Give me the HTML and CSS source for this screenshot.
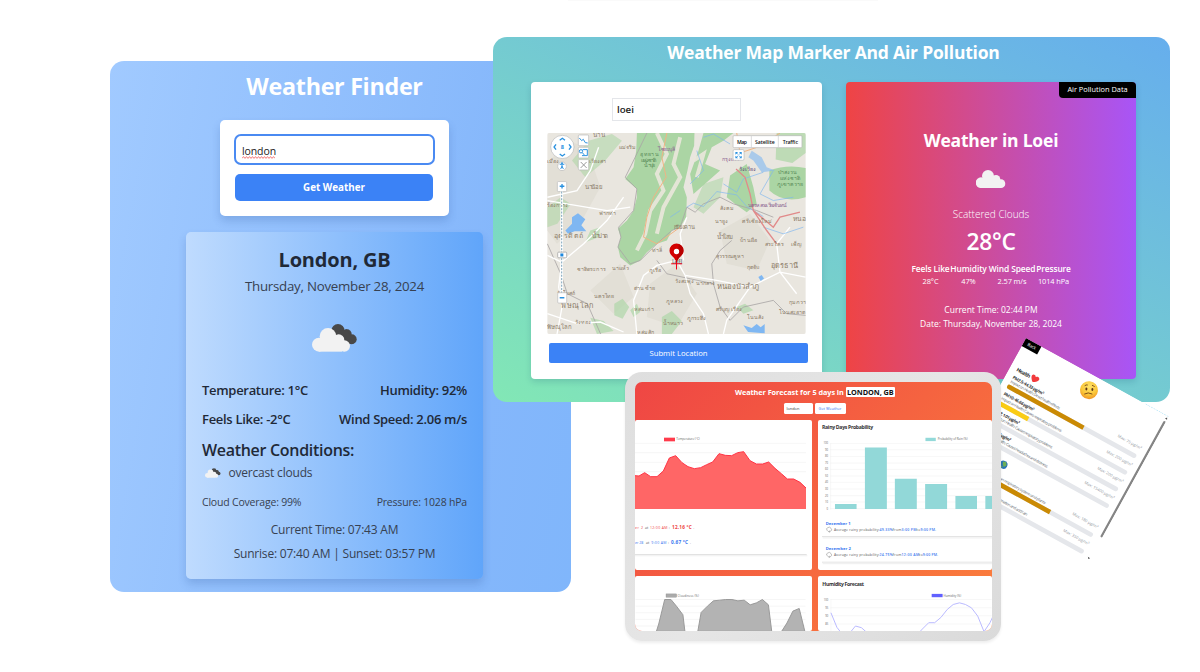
FILE: index.html
```html
<!DOCTYPE html>
<html lang="en">
<head>
<meta charset="utf-8">
<title>Weather Finder</title>
<link rel="stylesheet" href="styles.css">
</head>
<body>
<main class="board">
  <div class="top-edge"></div>

  <section class="window finder">
    <h1 class="finder-title">Weather Finder</h1>
    <form class="search">
      <div class="search-input"><span class="typed">london<svg class="squiggle" viewBox="0 0 33 3"><path d="M0 2.4l1.5-1.8 1.5 1.8 1.5-1.8 1.5 1.8 1.5-1.8 1.5 1.8 1.5-1.8 1.5 1.8 1.5-1.8 1.5 1.8 1.5-1.8 1.5 1.8 1.5-1.8 1.5 1.8 1.5-1.8 1.5 1.8 1.5-1.8 1.5 1.8 1.5-1.8 1.5 1.8 1.5-1.8 1.5 1.8"/></svg></span></div>
      <div class="search-button">Get Weather</div>
    </form>
    <article class="report">
      <h2 class="city">London, GB</h2>
      <p class="date">Thursday, November 28, 2024</p>
      <svg class="clouds-big" viewBox="0 0 134 84"><g fill="#484848"><circle cx="78" cy="20" r="20"/><circle cx="105" cy="30" r="14"/><circle cx="119" cy="46" r="15"/><path d="M65 25L105 16L125 60H100z"/></g><g fill="#f2f2f2"><circle cx="21" cy="62" r="21"/><circle cx="48" cy="37" r="25"/><circle cx="80" cy="48" r="17"/><circle cx="97" cy="66" r="17"/><path d="M21 45H90V83H21z"/></g></svg>
      <div class="pair"><span class="w101">Temperature: 1°C</span><span>Humidity: 92%</span></div>
      <div class="pair second"><span>Feels Like: -2°C</span><span>Wind Speed: 2.06 m/s</span></div>
      <h3 class="conditions">Weather Conditions:</h3>
      <div class="condition"><svg class="clouds-small" viewBox="0 0 134 84"><g fill="#484848"><circle cx="78" cy="20" r="20"/><circle cx="105" cy="30" r="14"/><circle cx="119" cy="46" r="15"/><path d="M65 25L105 16L125 60H100z"/></g><g fill="#f2f2f2"><circle cx="21" cy="62" r="21"/><circle cx="48" cy="37" r="25"/><circle cx="80" cy="48" r="17"/><circle cx="97" cy="66" r="17"/><path d="M21 45H90V83H21z"/></g></svg><span>overcast clouds</span></div>
      <div class="pair minor"><span>Cloud Coverage: 99%</span><span>Pressure: 1028 hPa</span></div>
      <p class="time">Current Time: 07:43 AM</p>
      <p class="time sun">Sunrise: 07:40 AM | Sunset: 03:57 PM</p>
    </article>
  </section>

  <section class="window marker">
    <h1 class="marker-title">Weather Map Marker And Air Pollution</h1>
    <div class="marker-cards">
      <div class="map-card">
        <div class="place">loei</div>
        <svg class="map" viewBox="171 307 776 604">
          <rect x="171" y="307" width="776" height="604" fill="#e9e6df"/>
          <g fill="#dedbd2" opacity=".7"><path d="M171 400L230 330 290 350 330 470 280 560 200 640 171 600zM480 760L560 700 620 790 560 890 470 860zM300 780L390 700 430 800 370 850zM690 600l90-50 60 80-40 90-90-20z"/></g>
          <g fill="#abd5a4">
            <path d="M440 307L613 307L612 345L600 380L592 420L580 470L590 500L588 560L570 590L545 600L530 630L500 640L470 665L450 690L420 705L390 680L383 650L392 620L383 595L410 570L430 540L440 500L440 475L405 445L430 410L438 360z"/>
            <path d="M645 400L665 350L700 330L730 307L640 307L625 360L600 430L610 490L650 455L690 420zM720 435L770 400L790 470L800 520L770 545L735 520L710 500z"/>
            <path d="M838 420Q890 400 947 412V500Q880 520 838 480z"/>
            <path d="M860 307h87v60l-40 30-50-10z" opacity=".7"/>
            <path d="M245 390l50-60 70-20 30 20-50 60-60 50zM171 530l40-30 30 20-40 60-30 10zM640 460l60-20-10 60-50 50-30-20z" opacity=".55"/>
            <path d="M372 820l25-15 20 25-20 35-25-10zM515 860l30-18 30 30-30 39h-30zM300 862l40 10 30 30-50 9zM740 830l25-10 25 20-30 10zM420 840l20-20 10 25-20 15zM300 600l30-10-5 30-40 15z" opacity=".65"/>
          </g>
          <g fill="none" stroke="#eae7dc" stroke-width="12" opacity=".9"><path d="M500 307L530 370L500 430L520 480L480 540L465 610L440 660M570 320L550 400L570 440L520 530L500 610M610 390L640 370L620 440"/></g>
          <g fill="none" stroke="#a9a6a6" stroke-width="2.5"><path d="M470 307L425 400L405 440L440 475L430 540L385 590L392 620L383 650L420 700L450 690L500 640L545 600L570 590L590 530L615 545L640 520L690 500L730 520L800 540L850 560M500 690L530 730 600 745 670 760 690 830 720 870 760 830 850 810 890 850 947 855M670 760L665 700 690 660 725 630M171 640l40 90 20 60 60 30 40 91"/></g>
          <g fill="none" stroke="#fff" stroke-width="4"><path d="M171 675L214 695L280 640L350 570L400 500M214 690L205 770L215 830L200 911M325 350L300 420L260 480L171 500M171 850L260 880L330 875L400 905M560 690L500 705L460 735L430 810L440 911M560 690L585 735L600 790L640 850L655 911M580 690L570 610L590 560M585 735L680 750L780 770L870 725L947 740M870 725L860 640L900 590M870 725L920 790M700 911L710 870L780 770M171 510L350 540L420 530"/></g>
          <g fill="none" stroke="#7eb6ef" stroke-width="2"><path d="M590 530l20-12 30 10 40-45 60 10 30 35 50 30M700 460l40 25 20-40 60-20M850 420l-40 70 40 20 60-10M620 360l20 60-40 40M540 560l30-20M820 590l60 20 60-20M640 320l30-10 50 30"/></g>
          <g fill="#7fb7f2"><path d="M245 560l18-12 22 18-12 18 15 18-35 0-20 8 -8-10 20-20zM760 885l25 8 15-12 12 10 12-10v28l-50-4zM805 740l10-6 7 10-10 8z"/><path d="M785 360l30 20 15 30 25 10-40 5-25-35-15-10z" opacity=".6"/></g>
          <g fill="none" stroke="#e18a8a" stroke-width="4"><path d="M738 415L765 440L780 490L790 540L850 590L870 560L930 545M790 540L830 600L860 640"/></g>
          <g fill="none" stroke="#f0b384" stroke-width="3"><path d="M530 307L515 380L528 440L490 500L470 560L460 620L500 640L570 590M740 307l10 60 60-20 60-40"/></g>
          <g class="thai">
            <text x="309" y="320" font-size="19">น่าน</text><text x="386" y="355" textLength="52">แม่จริม</text>
            <text x="504" y="362" textLength="50" fill="#8a6090">ไชยะบุลี</text><text x="285" y="475" textLength="52" font-size="18">นาน้อย</text>
            <text x="450" y="376" fill="#578957" textLength="55">อุทยาน</text><text x="452" y="393" fill="#578957" textLength="45">แห่งชาติ</text><text x="458" y="410" fill="#578957" textLength="33">น้ำปุย</text>
            <text x="171" y="397">เมือง</text><text x="295" y="397">เวียงสา</text><text x="171" y="530">ร้องกวาง</text>
            <text x="695" y="392" fill="#8a6090">กรุงเก่า</text><text x="746" y="420" fill="#604878">วังเวียง</text>
            <text x="864" y="431" fill="#578957">ป่าสงวน</text><text x="870" y="449" fill="#578957">แห่งชาติ</text><text x="862" y="467" fill="#578957">ภูเขาควาย</text>
            <text x="690" y="537">สังคม</text><text x="773" y="529" textLength="118" fill="#8a6090">นครหลวงเวียงจันทน์</text><text x="910" y="572" font-size="20">หนอง</text>
            <text x="326" y="552" textLength="52">ฟากท่า</text><text x="551" y="594" textLength="63" font-size="17">เชียงคาน</text><text x="676" y="576">นายูง</text><text x="757" y="576" textLength="90">ศรีเชียงใหม่</text>
            <text x="191" y="624" textLength="87" font-size="21">อุตรดิตถ์</text><text x="303" y="624" textLength="50" font-size="18">น้ำปาด</text><text x="679" y="625" textLength="48" font-size="18">น้ำโสม</text><text x="750" y="636" textLength="52">บ้านผือ</text><text x="825" y="647">สระใคร</text><text x="903" y="647">เพ็ญ</text>
            <text x="486" y="664">ท่าลี่</text><text x="678" y="684" textLength="84">สุวรรณคูหา</text><text x="771" y="717">กุดจับ</text><text x="842" y="714" textLength="82" font-size="22">อุดรธานี</text>
            <text x="260" y="721" textLength="86">ชาติตระการ</text><text x="364" y="718">นาแห้ว</text><text x="475" y="724">ภูเรือ</text><text x="555" y="758">วังสะพุง</text><text x="617" y="763">นากลาง</text><text x="680" y="775" textLength="127" font-size="23">หนองบัวลำภู</text>
            <text x="432" y="780" textLength="62">ด่านซ้าย</text><text x="200" y="794">วัดโบสถ์</text><text x="312" y="804" textLength="60">นครไทย</text><text x="528" y="818">ภูหลวง</text><text x="213" y="832" textLength="94" font-size="22">พิษณุโลก</text><text x="430" y="843" textLength="60">หล่มเก่า</text><text x="677" y="843" textLength="80">ศรีบุญเรือง</text>
            <text x="592" y="868">ภูกระดึง</text><text x="772" y="867">โนนสัง</text><text x="866" y="850" textLength="80">โนนสะอาด</text><text x="897" y="820">กุมภวาปี</text><text x="518" y="884" textLength="58">น้ำหนาว</text><text x="255" y="882">วังทอง</text><text x="171" y="897" font-size="18">พิษณุโลก</text><text x="440" y="911">หล่มสัก</text>
          </g>
          <g fill="#fff" stroke="#b8b8b8" stroke-width="2"><circle cx="216" cy="349" r="35"/><circle cx="215" cy="407" r="13"/><rect x="264" y="313" width="31" height="32" rx="3"/><rect x="264" y="350" width="31" height="32" rx="3"/><rect x="264" y="387" width="31" height="31" rx="3"/><rect x="201" y="453" width="28" height="30" rx="3"/><rect x="729" y="357" width="33" height="32" rx="4"/><rect x="729" y="315" width="207" height="36" rx="3"/></g>
          <path d="M214 483V788" stroke="#fff" stroke-width="8"/><path d="M214 483V788" stroke="#7aa3ba" stroke-width="3" stroke-dasharray="6 4"/>
          <rect x="202" y="665" width="27" height="17" rx="3" fill="#fff" stroke="#999" stroke-width="2"/><rect x="210" y="669" width="9" height="9" fill="#1d87dd"/>
          <rect x="202" y="787" width="27" height="31" rx="3" fill="#fff" stroke="#bbb" stroke-width="2"/>
          <g fill="none" stroke="#2a91df" stroke-width="4"><path d="M208 329l8-6 8 6M208 370l8 6 8-6M197 341l-6 8 6 8M236 341l6 8-6 8M208 467h14M215 460v14M208 802h14"/><path d="M267 322l7 8 5-4 6 10 7 1" stroke-width="3"/><circle cx="272" cy="362" r="5" stroke-width="3"/><path d="M277 357h14v18h-16M276 366l6 7" stroke-width="3"/><path d="M215 403v7M208 401h14M215 407l-4 8M215 407l4 8" stroke-width="3"/></g>
          <circle cx="215" cy="398" r="3" fill="#2a91df"/><text x="216" y="355" text-anchor="middle" font-size="17" font-weight="700" fill="#2a91df">8</text>
          <path d="M271 394l18 18M289 394l-18 18" stroke="#999" stroke-width="3"/>
          <path d="M736 364h8l-8 8zM755 364h-8l8 8zM736 383h8l-8-8zM755 383h-8l8-8z" fill="#2a91df"/><path d="M739 367l13 13M752 367l-13 13" stroke="#2a91df" stroke-width="3" stroke-dasharray="6 6"/>
          <path d="M784 316V350M865 316V350" stroke="#ccc" stroke-width="2"/>
          <g font-size="15.5" font-weight="600" fill="#111"><text x="741" y="339" textLength="30">Map</text><text x="795" y="339" textLength="59">Satellite</text><text x="878" y="339" textLength="46">Traffic</text></g>
          <text x="544" y="701" font-size="22" fill="#666">เลย</text>
          <path d="M543 700H576M559 682V717" stroke="#f00018" stroke-width="3"/>
          <path d="M559 696C552 676 538 676 538 660a21 21 0 0 1 42 0C580 676 566 676 559 696z" fill="#d40000"/><path d="M566 641a21 21 0 0 1 14 20C580 676 566 676 559 696z" fill="#b80000"/><circle cx="559" cy="663" r="8" fill="#fff"/>
        </svg>
        <div class="submit">Submit Location</div>
      </div>
      <div class="loei">
        <span class="badge">Air Pollution Data</span>
        <h2 class="loei-title">Weather in Loei</h2>
        <svg class="cloud" viewBox="0 0 88 54"><g fill="#f2f2f2"><circle cx="15" cy="38" r="16"/><circle cx="36" cy="18" r="18"/><circle cx="60" cy="28" r="13"/><circle cx="75" cy="41" r="13"/><path d="M15 28H70V54H12z"/><path d="M60 40H76V54H60z"/></g></svg>
        <p class="sky">Scattered Clouds</p>
        <p class="degrees">28°C</p>
        <div class="stats"><b>Feels Like</b><b>Humidity</b><b>Wind Speed</b><b>Pressure</b><span>28°C</span><span>47%</span><span>2.57 m/s</span><span>1014 hPa</span></div>
        <p class="now">Current Time: 02:44 PM</p>
        <p class="now day">Date: Thursday, November 28, 2024</p>
      </div>
    </div>
  </section>

  <svg class="paper" viewBox="0 0 490 492">
    <rect width="490" height="492" fill="#fff"/>
    <path d="M410 0H490" stroke="#7fd0f0" stroke-width="2" stroke-dasharray="6 3"/>
    <rect width="53" height="27" fill="#000"/><text x="13" y="18" font-size="13" fill="#fff" textLength="28">Back</text>
    <g font-weight="700" fill="#333"><text x="21" y="101" font-size="16" textLength="46">Health</text><g font-size="13"><text x="22" y="126" textLength="105">PM2.5: 44.33 µg/m³</text><text x="22" y="182" textLength="103">PM10: 46.66 µg/m³</text><text x="22" y="239" textLength="84">NO2: 1.01 µg/m³</text><text x="22" y="296" textLength="86">CO: 250.34 µg/m³</text></g></g>
    <path d="M81 106C64 93 69 81 78 85c3 1 4 4 4 4s5-7 11-2c7 7-5 17-12 19z" fill="#f23b3d"/>
    <g font-size="12" fill="#5a5f69"><text x="22" y="140" textLength="169">Impact on Health: Direct health effects</text><text x="22" y="197" textLength="206">Impact on Health: Causes respiratory problems</text><text x="22" y="254" textLength="206">Impact on Health: Causes respiratory problems</text><text x="22" y="311" textLength="221">Impact on Health: Causes headaches and dizziness</text><text x="22" y="410" textLength="268">Impact: Affects the human respiratory system and plants</text><text x="22" y="467" textLength="237">Impact: Contributes to particle formation and acid rain</text></g>
    <g font-size="12" fill="#9499a2" text-anchor="end"><text x="463" y="128">Max: 75 µg/m³</text><text x="463" y="185">Max: 200 µg/m³</text><text x="463" y="242">Max: 200 µg/m³</text><text x="463" y="298">Max: 15400 µg/m³</text><text x="463" y="398">Max: 180 µg/m³</text><text x="463" y="455">Max: 350 µg/m³</text></g>
    <g fill="#e5e7eb"><rect x="20" y="146" width="441" height="14" rx="7"/><rect x="20" y="203" width="441" height="14" rx="7"/><rect x="20" y="260" width="441" height="14" rx="7"/><rect x="20" y="317" width="441" height="14" rx="7"/><rect x="20" y="416" width="441" height="14" rx="7"/><rect x="20" y="473" width="441" height="14" rx="7"/></g>
    <path d="M27 146H281V160H27a7 7 0 0 1 0-14zM27 416H315V430H27a7 7 0 0 1 0-14z" fill="#ca8a04"/><path d="M27 203H123V217H27a7 7 0 0 1 0-14z" fill="#facc15"/>
    <defs><radialGradient id="face" cx=".5" cy=".3" r=".75"><stop offset="0" stop-color="#ffe36b"/><stop offset=".6" stop-color="#fac638"/><stop offset="1" stop-color="#ee8b22"/></radialGradient></defs>
    <g transform="translate(241 46) rotate(-24)"><circle r="27" fill="url(#face)"/><ellipse cx="-8" cy="-3" rx="3" ry="4.5" fill="#5c3516"/><ellipse cx="10" cy="-3" rx="3" ry="4.5" fill="#5c3516"/><path d="M-13 13Q-2 5 11 11M-14-12q4-4 9-3M8-15q5 0 8 4" fill="none" stroke="#6b3b12" stroke-width="2.5"/></g>
    <circle cx="124" cy="366" r="12" fill="#2a75b5"/><path d="M118 358l9-3 6 8-5 8-6-4zM119 371l6 1-2 5z" fill="#6caf56"/>
    <rect x="482" y="18" width="7" height="397" rx="3" fill="#858585"/><path d="M482 11h8l-4-6zM479 486h8l-4 5z" fill="#555"/>
  </svg>

  <section class="tablet">
    <div class="screen">
      <header class="forecast-head">
        <h2 class="forecast-title">Weather Forecast for 5 days in <span class="tag">LONDON, GB</span></h2>
        <div class="forecast-form"><span class="mini">london</span><span class="mini link">Get Weather</span></div>
      </header>
      <div class="charts">
        <svg class="panel tall" viewBox="45 165 531 450">
          <g stroke="#ededed" stroke-width="1.5"><path d="M45 235H558M45 263H558M45 292H558M45 320H558"/></g>
          <rect x="132" y="218" width="33" height="11" fill="#ff3b4b"/><text x="169" y="226" font-size="9" textLength="70" fill="#666">Temperature (°C)</text>
          <path d="M45 332L57 333 74 323 92 335 111 335 130 318 148 279 167 272 186 293 204 305 223 311 242 308 260 299 278 291 297 266 316 271 335 272 353 263 371 260 390 287 409 297 428 297 446 291 465 310 502 342 521 342 540 352 558 369V432H45z" fill="#ff6666"/>
          <path class="dots red" d="M45 332L57 333 74 323 92 335 111 335 130 318 148 279 167 272 186 293 204 305 223 311 242 308 260 299 278 291 297 266 316 271 335 272 353 263 371 260 390 287 409 297 428 297 446 291 465 310 484 326 502 342 521 342 540 352 558 369"/>
          <g font-size="10.5"><g fill="#ee3e3e"><text x="45" y="491" textLength="24">er 2</text><text x="90" y="491" textLength="52">12:00 AM</text><text x="156" y="492" font-size="14" font-weight="700" textLength="59">12.16 °C</text></g><g fill="#3675ef"><text x="45" y="536" textLength="25">er 28</text><text x="94" y="536" textLength="45">9:00 AM</text><text x="153" y="537" font-size="14" font-weight="700" textLength="51">0.67 °C</text></g><g fill="#555"><text x="75" y="491">at</text><text x="146" y="491">:</text><text x="220" y="491">.</text><text x="78" y="536">at</text><text x="144" y="536">:</text><text x="210" y="536">.</text></g></g>
          <rect x="45" y="567" width="515" height="3" fill="#e2e2e2"/><rect x="45" y="570" width="517" height="4" fill="#f3f3f3"/>
        </svg>
        <svg class="panel tall" viewBox="24 165 523 450">
          <g stroke="#eee" stroke-width="1.5"><path d="M60 235H547M60 254H547M60 274H547M60 294H547M60 313H547M60 333H547M60 352H547M60 372H547M60 392H547M60 411H547M60 431H547M62 235V434"/></g>
          <text x="36" y="192" font-size="15.5" font-weight="700" textLength="154" fill="#333">Rainy Days Probability</text>
          <rect x="347" y="218" width="31" height="10" fill="#93d9d9"/><text x="384" y="226" font-size="9" textLength="90" fill="#666">Probability of Rain (%)</text>
          <g class="axis"><text x="54" y="238">100</text><text x="54" y="257">90</text><text x="54" y="277">80</text><text x="54" y="297">70</text><text x="54" y="316">60</text><text x="54" y="336">50</text><text x="54" y="355">40</text><text x="54" y="375">30</text><text x="54" y="395">20</text><text x="54" y="414">10</text><text x="54" y="434">0</text></g>
          <path d="M75 417h65v15H75zM165 247h66v185h-66zM255 341h66v91h-66zM346 357h66v75h-66zM437 393h65v39h-65zM527 393h20v39h-20z" fill="#92d8d8"/>
          <g font-size="12.5" font-weight="700" fill="#3675ef"><text x="47" y="480" textLength="75">December 1</text><text x="47" y="556" textLength="76">December 2</text></g>
          <g fill="none" stroke="#888" stroke-width="1.6"><path id="rain" d="M52 497q-6-7 2-9 5-4 9 2 5 5-1 9l-4-1 1 4-5-3z"/><path d="M52 573q-6-7 2-9 5-4 9 2 5 5-1 9l-4-1 1 4-5-3z"/></g>
          <g font-size="10.5" fill="#555"><text x="72" y="498" textLength="137">Average rainy probability:</text><text x="249" y="498" textLength="26">from</text><text x="320" y="498" textLength="12">to</text><text x="72" y="574" textLength="137">Average rainy probability:</text><text x="249" y="574" textLength="26">from</text><text x="328" y="574" textLength="11">to</text></g>
          <g font-size="10.5" font-weight="600" fill="#3675ef"><text x="209" y="498" textLength="40">49.33%</text><text x="275" y="498" textLength="45">3:00 PM</text><text x="332" y="498" textLength="47">9:00 PM.</text><text x="209" y="574" textLength="40">24.75%</text><text x="275" y="574" textLength="53">12:00 AM</text><text x="339" y="574" textLength="46">9:00 PM.</text></g>
          <path d="M36 515H547M36 592H547" stroke="#e2e2e2" stroke-width="3"/><path d="M38 519H547M38 596H547" stroke="#f1f1f1" stroke-width="4"/>
        </svg>
        <svg class="panel low" viewBox="45 633 531 166">
          <g stroke="#ededed" stroke-width="1.5"><path d="M45 704H558M45 724H558M45 744H558M45 764H558M45 784H558"/></g>
          <rect x="137" y="687" width="32" height="10" fill="#aaa" stroke="#888"/><text x="172" y="695" font-size="9" textLength="64" fill="#666">Cloudiness (%)</text>
          <g fill="#b3b3b3" class="grey"><path d="M108 800L115 778 133 704 152 704 170 726 188 750 194 800zM233 800L243 743 262 724 280 708 299 706 317 704 336 704 354 708 373 706 391 720 410 714 428 704 446 720 456 800zM486 800L502 775 520 739 539 731 556 800z"/></g>
        </svg>
        <svg class="panel low" viewBox="24 633 523 166">
          <g stroke="#eee" stroke-width="1.5"><path d="M60 704H547M60 729H547M60 753H547M60 778H547M62 704V799"/></g>
          <text x="36" y="663" font-size="15.5" font-weight="700" textLength="126" fill="#333">Humidity Forecast</text>
          <rect x="366" y="687" width="33" height="10" fill="#6161ff"/><text x="402" y="695" font-size="9" textLength="53" fill="#666">Humidity (%)</text>
          <g class="axis"><text x="54" y="707">100</text><text x="54" y="732">95</text><text x="54" y="756">90</text><text x="54" y="781">85</text></g>
          <path class="dots blue" d="M62 744L80 788 99 812 118 806 136 784 154 789 172 805 200 830 300 830 320 812 338 793 357 774 375 774 394 758 413 734 431 719 450 714 468 719 486 729 505 754 524 801 542 774 560 735"/>
        </svg>
      </div>
    </div>
  </section>
</main>
</body>
</html>
```
FILE: styles.css
```css
* { box-sizing: border-box; margin: 0; padding: 0; }
body { width: 1200px; height: 672px; overflow: hidden; background: #fff; font-family: "Open Sans", "Noto Sans", sans-serif; color: #1f2937; }
p, h1, h2, h3, span, b, div { white-space: nowrap; }
.board { position: relative; width: 1200px; height: 672px; overflow: hidden; }
.top-edge { width: 310px; height: 1px; margin-left: 568px; background: #fafafa; }
.window { position: absolute; border-radius: 14px; }

.finder { left: 110px; top: 61px; width: 461px; height: 531px; padding: 11px 88px 0 76px; background: linear-gradient(100deg, #a1caff, #85b7fb 75%, #80b6fb); display: flex; flex-direction: column; align-items: center; }
.finder-title { font-size: 23.3px; line-height: 28px; color: #fff; letter-spacing: -0.3px; }
.search { width: 229px; height: 96px; margin-top: 20px; padding: 14px; border-radius: 5px; background: #fff; box-shadow: 0 5px 9px rgba(30, 70, 140, .2); }
.search-input { height: 31px; width: 201px; border: 2px solid #4a8af2; border-radius: 7px; padding: 0 6px; display: flex; align-items: center; font-size: 10.5px; letter-spacing: -.1px; color: #222; }
.typed { display: flex; flex-direction: column; line-height: 14px; padding-top: 3px; }
.squiggle { width: 33px; height: 3px; margin-top: -2px; fill: none; stroke: #f05a5a; stroke-width: .8; }
.search-button { width: 198px; margin: 9px 0 0 1px; height: 27px; line-height: 27px; border-radius: 5px; background: #3b82f6; color: #fff; text-align: center; font-size: 9.8px; font-weight: 700; }
.report { width: 297px; height: 347px; margin-top: 16px; padding: 15px 16px 0; border-radius: 5px; background: linear-gradient(90deg, #bfdbfe, #60a5fa); box-shadow: 0 5px 9px rgba(30, 70, 140, .2); }
.city { font-size: 20px; line-height: 26px; text-align: center; letter-spacing: -.2px; }
.date { margin-top: 3px; font-size: 13.3px; line-height: 20px; text-align: center; color: #374151; letter-spacing: -.25px; }
.clouds-big { display: block; width: 44.7px; height: 28px; margin: 28px auto 29px; }
.pair { display: flex; justify-content: space-between; font-size: 13px; line-height: 18px; font-weight: 600; letter-spacing: -.3px; }
.second { margin-top: 11px; }
.conditions { margin-top: 11px; font-size: 16px; line-height: 22px; font-weight: 600; letter-spacing: -.3px; }
.condition { display: flex; align-items: center; gap: 8px; margin-top: 4px; padding-left: 3px; font-size: 12px; line-height: 16px; letter-spacing: -.2px; color: #374151; }
.clouds-small { width: 15.5px; height: 10px; }
.minor { margin-top: 14px; font-size: 10.5px; line-height: 14px; font-weight: 400; color: #374151; letter-spacing: -.2px; }
.time { margin-top: 13px; font-size: 12px; line-height: 16px; text-align: center; color: #374151; letter-spacing: -.2px; }
.sun { margin-top: 8px; }

.marker { left: 493px; top: 37px; width: 677px; height: 365px; padding: 3px 34px 0 38px; background: linear-gradient(to top right, #82e7b5, #66aeed); }
.marker-title { font-size: 17.5px; line-height: 24px; color: #fff; text-align: center; letter-spacing: -.2px; }
.marker-cards { display: flex; justify-content: space-between; margin-top: 18px; }
.map-card { width: 291px; height: 297px; padding: 16px 13px 0 16px; border-radius: 4px; background: #fff; box-shadow: 0 3px 6px rgba(20, 80, 110, .18); }
.place { width: 129px; height: 23px; margin-left: 65px; padding-left: 4px; border: 1px solid #e4e6ea; font-size: 9.7px; line-height: 22px; font-weight: 600; color: #222; }
.map { display: block; width: 259px; height: 201px; margin-top: 12px; border-radius: 2px; }
.thai { font-size: 16px; fill: #8a7a66; }
.submit { width: 259px; height: 20px; margin: 9px 0 0 2px; border-radius: 2px; background: #3b82f6; color: #fff; text-align: center; font-size: 7.7px; line-height: 20px; }
.loei { position: relative; width: 290px; height: 297px; padding-top: 46px; border-radius: 4px; background: linear-gradient(90deg, #ef4444, #a855f7); box-shadow: 0 3px 6px rgba(20, 80, 110, .18); color: #fff; text-align: center; }
.badge { position: absolute; top: 0; right: 0; width: 77px; height: 16px; border-radius: 0 4px 0 4px; background: #000; font-size: 7.4px; line-height: 15px; }
.loei-title { font-size: 17.5px; line-height: 24px; letter-spacing: -.2px; }
.cloud { display: block; width: 29.3px; height: 18px; margin: 18px auto 19px; }
.sky { font-size: 10px; line-height: 14px; font-weight: 300; }
.degrees { margin-top: 6px; font-size: 22.8px; line-height: 30px; font-weight: 600; letter-spacing: -.3px; }
.stats { display: grid; grid-template-columns: 38px 38px 49px 34px; justify-content: center; justify-items: center; margin-top: 6px; line-height: 12px; font-size: 7.4px; letter-spacing: -.1px; }
.stats b { font-size: 8.4px; font-weight: 600; margin: 0 -4px; }
.now { margin-top: 16px; font-size: 8.5px; line-height: 14px; }
.day { margin-top: 0; }

.paper { position: absolute; left: 1025.7px; top: 338px; width: 163.3px; height: 164px; transform-origin: 0 0; transform: rotate(28.8deg); }

.tablet { position: absolute; left: 625px; top: 372px; width: 376px; height: 269px; padding: 10px 9px 10px 10px; border-radius: 17px; background: linear-gradient(135deg, #dedede, #e6e6e6 50%, #dadada); box-shadow: 0 2px 3px rgba(0, 0, 0, .07); }
.screen { height: 249px; border-radius: 7px; overflow: hidden; background: linear-gradient(135deg, #ef4644, #fb803c); }
.forecast-head { height: 38px; padding-top: 5px; display: flex; flex-direction: column; align-items: center; }
.forecast-title { color: #fff; font-size: 7.3px; line-height: 11px; letter-spacing: -.06px; padding-left: 3px; }
.tag { display: inline-block; height: 10px; line-height: 10px; padding: 0 1.5px; border-radius: 1px; background: #fff; color: #111; }
.forecast-form { display: flex; gap: 2px; margin: 5px 0 0 2px; }
.mini { width: 29px; height: 11px; padding-left: 3px; border-radius: 1.5px; background: #fff; color: #333; font-size: 3.9px; line-height: 11px; }
.link { width: 31px; padding: 0; text-align: center; color: #3675ef; }
.charts { display: grid; grid-template-columns: 177px 174px; grid-template-rows: 150px 55px; gap: 6px; }
.panel { display: block; width: 100%; background: #fff; border-radius: 2px; }
.tall { height: 150px; }
.low { height: 55px; }
.axis { font-size: 8px; fill: #666; text-anchor: end; }
.dots { fill: none; stroke-width: 3; }
.red { stroke: #ff3344; }
.blue { stroke: #b9b9ff; }
.grey { stroke: #999; stroke-width: 3; }
```
